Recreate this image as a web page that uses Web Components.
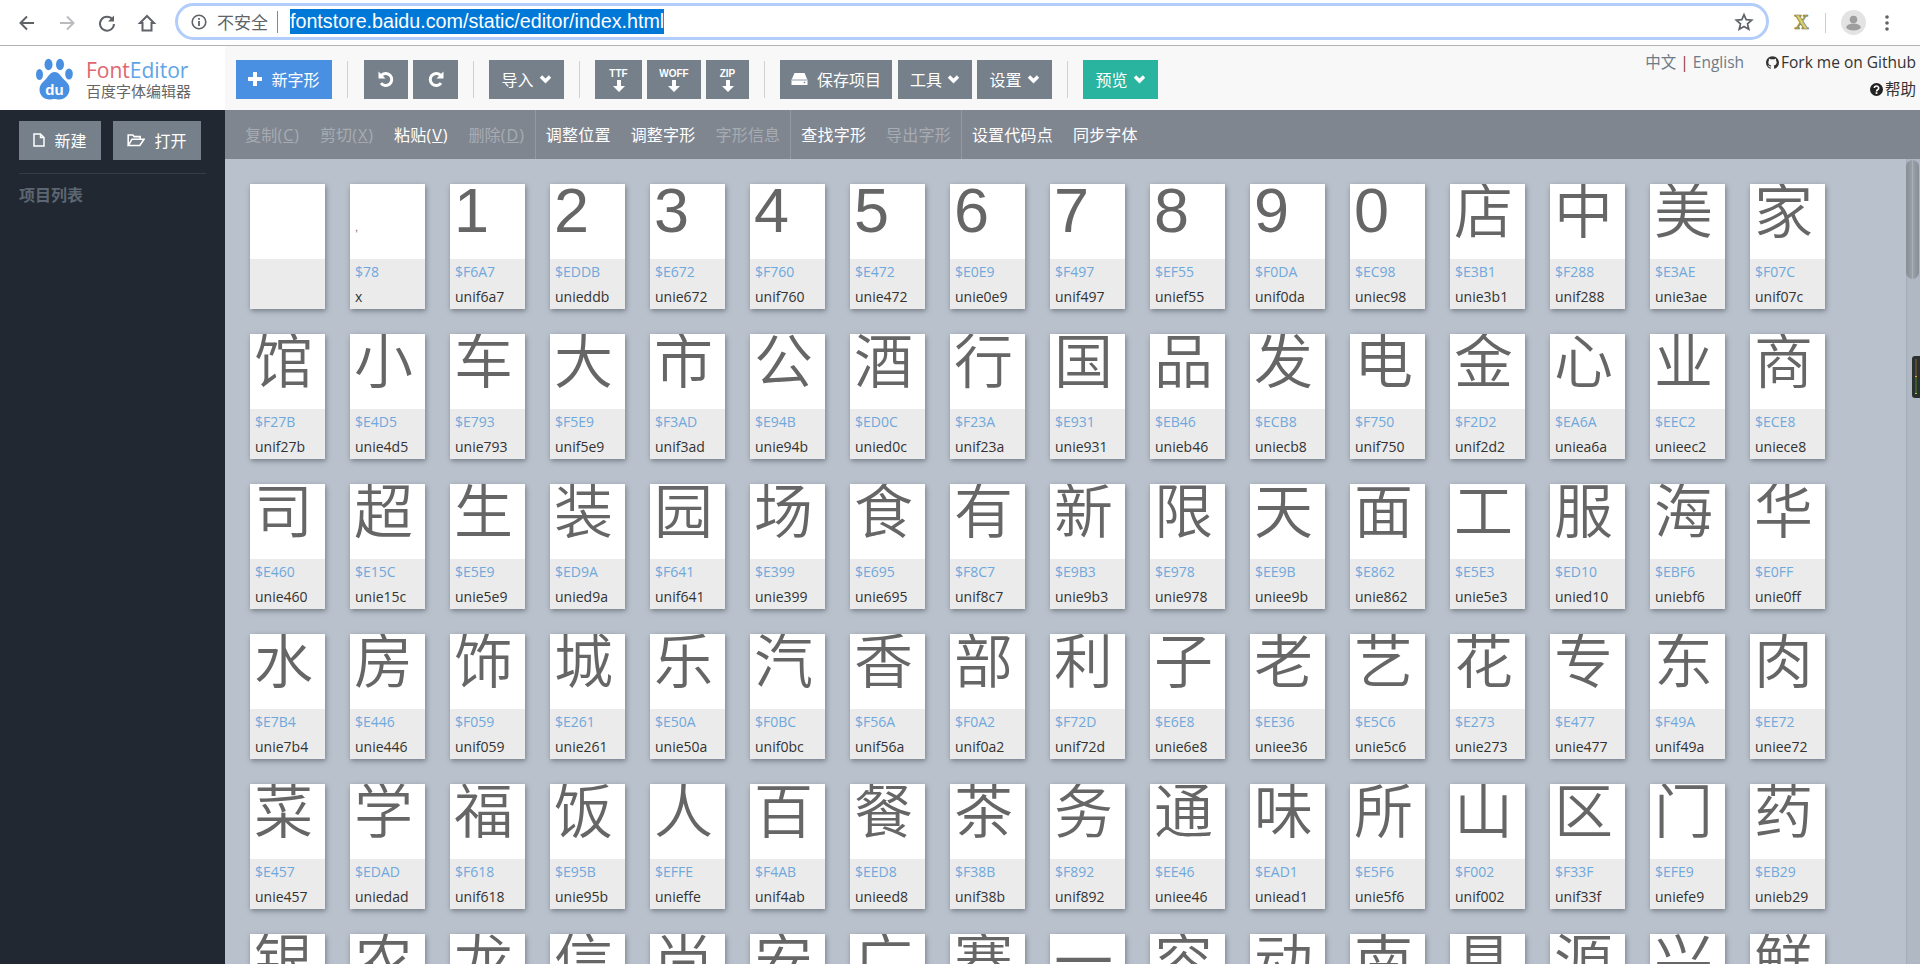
<!DOCTYPE html>
<html lang="zh">
<head>
<meta charset="utf-8">
<title>FontEditor</title>
<style>
  html, body { margin: 0; height: 964px; overflow: hidden; background: #b9c2cc; }
  body {
    display: flex;
    flex-direction: column;
    font-family: "Open Sans", "Noto Sans CJK SC", sans-serif;
  }
</style>
</head>
<body>
<browser-bar></browser-bar>
<app-header></app-header>
<app-main>
  <side-bar slot="side"></side-bar>
  <glyph-toolbar slot="tools"></glyph-toolbar>
  <glyph-list slot="list"></glyph-list>
</app-main>

<script>
const ICONS = {
  plus: '<svg width="14" height="14" viewBox="0 0 14 14"><path d="M5 0h4v5h5v4H9v5H5V9H0V5h5z" fill="#fff"/></svg>',
  undo: '<svg width="18" height="18" viewBox="0 0 18 18"><path d="M4.6 5.2A6 6 0 1 1 4 13.2" fill="none" stroke="#fff" stroke-width="3"/><path d="M1.5 1.5v7h7z" fill="#fff"/></svg>',
  redo: '<svg width="18" height="18" viewBox="0 0 18 18"><path d="M13.4 5.2A6 6 0 1 0 14 13.2" fill="none" stroke="#fff" stroke-width="3"/><path d="M16.5 1.5v7h-7z" fill="#fff"/></svg>',
  chevron: '<svg width="13" height="10" viewBox="0 0 13 10"><path d="M2 2.5l4.5 4.5L11 2.5" fill="none" stroke="#fff" stroke-width="3.4"/></svg>',
  arrow: '<svg width="12" height="12" viewBox="0 0 12 12"><path d="M4 0h4v6h4l-6 6-6-6h4z" fill="#fff"/></svg>',
  hdd: '<svg width="17" height="14" viewBox="0 0 17 14"><path d="M3.5 1h10l3 7v5H.5V8z" fill="#fff"/><path d="M1 8h15" stroke="#75808a" stroke-width=".8"/><circle cx="13.5" cy="10.5" r=".8" fill="#75808a"/></svg>',
  file: '<svg width="12" height="14" viewBox="0 0 12 14"><path d="M1 1h6.5L11 4.5V13H1z M7.5 1v3.5H11" fill="none" stroke="#fff" stroke-width="1.5"/></svg>',
  folder: '<svg width="18" height="14" viewBox="0 0 18 14"><path d="M1.2 12V2h4.6l1.4 1.6h6V6 M1.2 12.5h11.6L17 6.2H5z" fill="none" stroke="#fff" stroke-width="1.6"/></svg>',
  github: '<svg width="13" height="13" viewBox="0 0 24 24"><path fill="#333" d="M12 .297c-6.63 0-12 5.373-12 12 0 5.303 3.438 9.8 8.205 11.385.6.113.82-.258.82-.577 0-.285-.01-1.04-.015-2.04-3.338.724-4.042-1.61-4.042-1.61C4.422 18.07 3.633 17.7 3.633 17.7c-1.087-.744.084-.729.084-.729 1.205.084 1.838 1.236 1.838 1.236 1.07 1.835 2.809 1.305 3.495.998.108-.776.417-1.305.76-1.605-2.665-.3-5.466-1.332-5.466-5.93 0-1.31.465-2.38 1.235-3.22-.135-.303-.54-1.523.105-3.176 0 0 1.005-.322 3.3 1.23.96-.267 1.98-.399 3-.405 1.02.006 2.04.138 3 .405 2.28-1.552 3.285-1.23 3.285-1.23.645 1.653.24 2.873.12 3.176.765.84 1.23 1.91 1.23 3.22 0 4.61-2.805 5.625-5.475 5.92.42.36.81 1.096.81 2.22 0 1.606-.015 2.896-.015 3.286 0 .315.21.69.825.57C20.565 22.092 24 17.592 24 12.297c0-6.627-5.373-12-12-12"/></svg>',
  help: '<svg width="13" height="13" viewBox="0 0 13 13"><circle cx="6.5" cy="6.5" r="6.5" fill="#222"/><path d="M4.3 5a2.2 2 0 1 1 3.3 1.8c-.8.5-1.1.8-1.1 1.6" fill="none" stroke="#fff" stroke-width="1.6"/><rect x="5.6" y="9.2" width="1.8" height="1.7" fill="#fff"/></svg>'
};

class BrowserBar extends HTMLElement {
  constructor() {
    super();
    this.attachShadow({ mode: 'open' });
    this.shadowRoot.innerHTML = `
      <style>
        :host {
          display: flex;
          align-items: center;
          flex: none;
          height: 45px;
          box-sizing: content-box;
          background: #fff;
          border-bottom: 1px solid #b4b4b4;
          font-family: "Liberation Sans", "Noto Sans CJK SC", sans-serif;
        }
        .nav { display: flex; width: 175px; padding-left: 17px; box-sizing: border-box; gap: 20px; }
        .nav svg { display: block; }
        .omni {
          flex: 1;
          height: 37px;
          margin-top: -2px;
          box-sizing: border-box;
          border: 3px solid #b3cdfb;
          border-radius: 19px;
          display: flex;
          align-items: center;
          padding-left: 13px;
          color: #5f6368;
          font-size: 17px;
        }
        .info { margin-right: 10px; }
        .sep { width: 1px; height: 22px; background: #888; margin: 0 12px 0 9px; }
        .url {
          background: #0078d7;
          color: #fff;
          font-size: 19.7px;
          line-height: 25px;
          height: 25px;
          white-space: nowrap;
        }
        .star { margin-left: auto; margin-right: 12px; }
        .ext { display: flex; align-items: center; width: 151px; flex: none; }
        .x { margin-left: 19px; font: bold 18px "DejaVu Serif", serif; color: #d9cf6c; -webkit-text-stroke: .6px #6b6a3a; width: 27px; text-align: center; }
        .line { width: 1px; height: 20px; background: #ccc; margin-left: 10px; }
        .avatar { margin-left: 15px; }
        .dots { margin-left: 19px; }
      </style>
      <div class="nav">
        <svg width="20" height="20" viewBox="0 0 20 20"><path d="M17 10H4M10 3.5L3.5 10l6.5 6.5" fill="none" stroke="#5f6368" stroke-width="2"/></svg>
        <svg width="20" height="20" viewBox="0 0 20 20"><path d="M3 10h13M10 3.5l6.5 6.5-6.5 6.5" fill="none" stroke="#b9bbbe" stroke-width="2"/></svg>
        <svg width="20" height="20" viewBox="0 0 20 20"><path d="M15.6 6.5A7 7 0 1 0 17 11" fill="none" stroke="#5f6368" stroke-width="2"/><path d="M17 2.5v6h-6z" fill="#5f6368"/></svg>
        <svg width="20" height="20" viewBox="0 0 20 20"><path d="M10 3L3 10h2.500v7.500h9V10H17z" fill="none" stroke="#5f6368" stroke-width="2"/></svg>
      </div>
      <div class="omni">
        <svg class="info" width="16" height="16" viewBox="0 0 16 16"><circle cx="8" cy="8" r="6.8" fill="none" stroke="#5f6368" stroke-width="1.6"/><path d="M7.100 7h1.800v5H7.100zM7.100 4h1.800v1.800H7.100z" fill="#5f6368"/></svg>
        <span>不安全</span><span class="sep"></span><span class="url">fontstore.baidu.com/static/editor/index.html</span>
        <svg class="star" width="20" height="20" viewBox="0 0 20 20"><path d="M10 2.600l2.200 5.100 5.500.5-4.200 3.600 1.300 5.400L10 14.400l-4.800 2.800 1.300-5.400L2.300 8.200l5.500-.5z" fill="none" stroke="#5f6368" stroke-width="1.700"/></svg>
      </div>
      <div class="ext">
        <span class="x">X</span>
        <span class="line"></span>
        <svg class="avatar" width="25" height="25" viewBox="0 0 25 25"><circle cx="12.5" cy="12.5" r="12.5" fill="#e3e3e3"/><circle cx="12.5" cy="9.5" r="3.8" fill="#9e9e9e"/><path d="M5 17.5c1-3 4-4 7.500-4s6.500 1 7.500 4c-1.500 2-4 3-7.500 3S6.500 19.500 5 17.500z" fill="#9e9e9e"/></svg>
        <svg class="dots" width="4" height="18" viewBox="0 0 4 18"><circle cx="2" cy="3" r="1.8" fill="#5f6368"/><circle cx="2" cy="9" r="1.8" fill="#5f6368"/><circle cx="2" cy="15" r="1.8" fill="#5f6368"/></svg>
      </div>
    `;
  }
}
customElements.define('browser-bar', BrowserBar);

class ToolBtn extends HTMLElement {
  constructor() {
    super();
    this.attachShadow({ mode: 'open' });
    this.shadowRoot.innerHTML = `
      <style>
        :host {
          display: inline-flex;
          align-items: center;
          justify-content: center;
          gap: 9px;
          height: 39px;
          padding-bottom: 2px;
          box-sizing: border-box;
          background: #75808a;
          color: #fff;
          font-size: 16px;
          white-space: nowrap;
          flex: none;
        }
        :host([kind="blue"]) { background: #4a90e2; }
        :host([kind="teal"]) { background: #29b49f; }
        :host([tight]) { gap: 5px; }
        svg { display: block; }
      </style>
      <slot></slot>
    `;
  }
}
customElements.define('tool-btn', ToolBtn);

class FileBtn extends HTMLElement {
  constructor() {
    super();
    this.attachShadow({ mode: 'open' });
    this.shadowRoot.innerHTML = `
      <style>
        :host {
          display: flex;
          flex-direction: column;
          align-items: center;
          justify-content: center;
          height: 39px;
          background: #75808a;
          color: #fff;
          font: bold 10px/11px "Liberation Sans", sans-serif;
          flex: none;
        }
        svg { display: block; margin-top: 1px; }
      </style>
      <span><slot></slot></span>${ICONS.arrow}
    `;
  }
}
customElements.define('file-btn', FileBtn);

class AppHeader extends HTMLElement {
  constructor() {
    super();
    this.attachShadow({ mode: 'open' });
    this.shadowRoot.innerHTML = `
      <style>
        :host {
          display: flex;
          flex: none;
          height: 64px;
          background: #f8f8f8;
          color: #333;
          font-size: 15.5px;
        }
        .logo {
          width: 225px;
          flex: none;
          background: #fff;
          display: flex;
          gap: 13px;
          padding: 12px 0 0 36px;
          box-sizing: border-box;
        }
        .logo svg { display: block; flex: none; }
        .name { font-size: 21px; line-height: 22px; margin-top: 1px; white-space: nowrap; }
        .name b { font-weight: 400; color: #e0666e; }
        .name i { font-style: normal; color: #5fa5e6; }
        .sub { font-size: 15px; line-height: 20px; color: #666; white-space: nowrap; }
        .tools { display: flex; align-items: flex-start; padding: 14px 0 0 11px; }
        .sep { width: 1px; height: 37px; margin: 1px 15px 0; background: #d0d0d0; flex: none; }
        .sep.first { margin-right: 16px; }
        .g5 { display: flex; gap: 5px; }
        .right {
          margin-left: auto;
          padding: 3px 4px 0 0;
          display: flex;
          flex-direction: column;
          align-items: flex-end;
          line-height: 27px;
          white-space: nowrap;
        }
        .line { display: flex; align-items: center; gap: 2px; }
        .lang { color: #6d7b88; margin-right: 20px; }
        .lang em { font-style: normal; color: #8b3a2c; }
      </style>
      <div class="logo">
        <svg width="37" height="42" viewBox="0 0 37 42">
          <g fill="#4a90e2">
            <ellipse cx="3.500" cy="16.500" rx="3.500" ry="5.500"/>
            <ellipse cx="12.500" cy="6.500" rx="4" ry="5.800"/>
            <ellipse cx="24" cy="6.500" rx="4" ry="5.800"/>
            <ellipse cx="33" cy="16" rx="3.800" ry="5.500"/>
            <path d="M18.500 14c5 0 6.500 5 10 8 3 2.500 5 5 5 9 0 6-5 10.500-10 10.500-2 0-3.500-.5-5-.5s-3 .5-5 .5c-5.500 0-10-4-10-10 0-4 2-6.500 5-9 3.500-3 5-8.500 10-8.500z"/>
          </g>
          <text x="18.500" y="37" text-anchor="middle" font-family="Liberation Sans" font-weight="700" font-size="15" fill="#fff">du</text>
        </svg>
        <div>
          <div class="name"><b>Font</b><i>Editor</i></div>
          <div class="sub">百度字体编辑器</div>
        </div>
      </div>
      <div class="tools">
        <tool-btn kind="blue" style="width:96px">${ICONS.plus}<span>新字形</span></tool-btn>
        <span class="sep first"></span>
        <div class="g5">
          <tool-btn style="width:44px">${ICONS.undo}</tool-btn>
          <tool-btn style="width:45px">${ICONS.redo}</tool-btn>
        </div>
        <span class="sep"></span>
        <tool-btn tight style="width:75px"><span>导入</span>${ICONS.chevron}</tool-btn>
        <span class="sep"></span>
        <div class="g5">
          <file-btn style="width:47px">TTF</file-btn>
          <file-btn style="width:54px">WOFF</file-btn>
          <file-btn style="width:43px">ZIP</file-btn>
        </div>
        <span class="sep"></span>
        <tool-btn style="width:112px">${ICONS.hdd}<span>保存项目</span></tool-btn>
        <tool-btn tight style="width:74px;margin-left:6px"><span>工具</span>${ICONS.chevron}</tool-btn>
        <tool-btn tight style="width:75px;margin-left:5px"><span>设置</span>${ICONS.chevron}</tool-btn>
        <span class="sep"></span>
        <tool-btn kind="teal" tight style="width:75px"><span>预览</span>${ICONS.chevron}</tool-btn>
      </div>
      <div class="right">
        <div class="line">
          <span class="lang">中文 <em>|</em> English</span>
          ${ICONS.github}<span>Fork me on Github</span>
        </div>
        <div class="line">${ICONS.help}<span>帮助</span></div>
      </div>
    `;
  }
}
customElements.define('app-header', AppHeader);

class AppMain extends HTMLElement {
  constructor() {
    super();
    this.attachShadow({ mode: 'open' });
    this.shadowRoot.innerHTML = `
      <style>
        :host {
          display: grid;
          grid-template-columns: 225px minmax(0, 1fr);
          grid-template-rows: 49px minmax(0, 1fr);
          flex: 1;
          min-height: 0;
        }
        ::slotted([slot="side"]) { grid-row: 1 / 3; }
      </style>
      <slot name="side"></slot>
      <slot name="tools"></slot>
      <slot name="list"></slot>
    `;
  }
}
customElements.define('app-main', AppMain);

class SideBar extends HTMLElement {
  constructor() {
    super();
    this.attachShadow({ mode: 'open' });
    this.shadowRoot.innerHTML = `
      <style>
        :host {
          display: block;
          background: #222831;
          padding: 11px 19px 0;
        }
        .btns { display: flex; gap: 12px; padding-bottom: 13px; border-bottom: 1px solid #363c45; }
        .title { margin-top: 9px; font-size: 16px; font-weight: 700; line-height: 24px; color: #5b6672; }
      </style>
      <div class="btns">
        <tool-btn style="width:82px">${ICONS.file}<span>新建</span></tool-btn>
        <tool-btn style="width:88px">${ICONS.folder}<span>打开</span></tool-btn>
      </div>
      <div class="title">项目列表</div>
    `;
  }
}
customElements.define('side-bar', SideBar);

class GlyphToolbar extends HTMLElement {
  constructor() {
    super();
    this.attachShadow({ mode: 'open' });
    const groups = [
      [['复制<b>(<u>C</u>)</b>', 0], ['剪切<b>(<u>X</u>)</b>', 0], ['粘贴<b>(<u>V</u>)</b>', 1], ['删除<b>(<u>D</u>)</b>', 0]],
      [['调整位置', 1], ['调整字形', 1], ['字形信息', 0]],
      [['查找字形', 1], ['导出字形', 0]],
      [['设置代码点', 1], ['同步字体', 1]]
    ];
    const html = groups.map(g => '<div class="group">' + g.map(([t, on]) =>
      `<span class="${on ? 'on' : ''}">${t}</span>`).join('') + '</div>').join('');
    this.shadowRoot.innerHTML = `
      <style>
        :host {
          display: flex;
          background: #808690;
          height: 49px;
          padding-left: 10px;
          font-size: 16px;
          white-space: nowrap;
        }
        .group { display: flex; align-items: center; padding-bottom: 2px; box-sizing: border-box; border-right: 1px solid #9299a2; }
        .group:last-child { border-right: 0; }
        span { padding: 0 10px; color: #a7acb3; letter-spacing: .2px; }
        span.on { color: #fff; }
        b { font-weight: 400; letter-spacing: 1px; }
      </style>
      ${html}
    `;
  }
}
customElements.define('glyph-toolbar', GlyphToolbar);

class GlyphItem extends HTMLElement {
  constructor() {
    super();
    this.attachShadow({ mode: 'open' });
    this.shadowRoot.innerHTML = `
      <style>
        :host {
          display: flex;
          flex-direction: column;
          width: 75px;
          height: 125px;
          background: #ebebeb;
          box-shadow: 1px 2px 5px rgba(60, 68, 78, .55);
        }
        .box {
          height: 75px;
          flex: none;
          background: #fff;
          overflow: hidden;
          color: #666;
          font: 350 59px/58px "Liberation Sans", "Noto Sans CJK SC", sans-serif;
          padding-left: 4px;
          box-sizing: border-box;
          white-space: nowrap;
        }
        :host([digit]) .box { font-size: 63px; line-height: 53px; padding-left: 4px; }
        :host([tiny]) .box { font-size: 11px; line-height: 86px; padding-left: 5px; }
        .code { padding-left: 5px; font-size: 14px; line-height: 21px; margin-top: 2px; height: 21px; color: #6fa8dc; }
        .name { padding-left: 5px; font-size: 14px; line-height: 21px; margin-top: 4px; height: 21px; color: #333; }
      </style>
      <div class="box"><slot></slot></div>
      <div class="code"></div>
      <div class="name"></div>
    `;
  }
  connectedCallback() {
    const code = this.getAttribute('code');
    const name = this.getAttribute('name');
    this.shadowRoot.querySelector('.code').textContent = code ? '$' + code : '';
    this.shadowRoot.querySelector('.name').textContent = name || '';
  }
}
customElements.define('glyph-item', GlyphItem);

const GLYPHS = '1 F6A7,2 EDDB,3 E672,4 F760,5 E472,6 E0E9,7 F497,8 EF55,9 F0DA,0 EC98,店 E3B1,中 F288,美 E3AE,家 F07C,' +
  '馆 F27B,小 E4D5,车 E793,大 F5E9,市 F3AD,公 E94B,酒 ED0C,行 F23A,国 E931,品 EB46,发 ECB8,电 F750,金 F2D2,心 EA6A,业 EEC2,商 ECE8,' +
  '司 E460,超 E15C,生 E5E9,装 ED9A,园 F641,场 E399,食 E695,有 F8C7,新 E9B3,限 E978,天 EE9B,面 E862,工 E5E3,服 ED10,海 EBF6,华 E0FF,' +
  '水 E7B4,房 E446,饰 F059,城 E261,乐 E50A,汽 F0BC,香 F56A,部 F0A2,利 F72D,子 E6E8,老 EE36,艺 E5C6,花 E273,专 E477,东 F49A,肉 EE72,' +
  '菜 E457,学 EDAD,福 F618,饭 E95B,人 EFFE,百 F4AB,餐 EED8,茶 F38B,务 F892,通 EE46,味 EAD1,所 E5F6,山 F002,区 F33F,门 EFE9,药 EB29';
const LAST_ROW = '银农龙信尚安广赛一容动南具源兴鲜';

class GlyphList extends HTMLElement {
  constructor() {
    super();
    this.attachShadow({ mode: 'open' });
    this.shadowRoot.innerHTML = `
      <style>
        :host {
          display: flex;
          position: relative;
          min-height: 0;
          overflow: hidden;
          background: #b9c2cc;
        }
        .grid {
          flex: 1;
          display: grid;
          grid-template-columns: repeat(16, 75px);
          column-gap: 25px;
          row-gap: 25px;
          align-content: start;
          padding: 25px 0 0 25px;
          height: 1000px;
        }
        .bar { width: 14px; flex: none; background: #b0b9c3; box-shadow: inset 1px 0 1px #a4adb7; }
        .thumb { height: 119px; margin-top: 1px; border-radius: 7px; width: 13px; background: linear-gradient(90deg, #868d95, #98a0a8 45%, #a9b0b7 50%, #98a0a8 55%, #868d95); }
        .meter {
          position: absolute;
          right: 0;
          top: 197px;
          width: 8px;
          height: 42px;
          background: #2b3030;
          border-radius: 3px 0 0 3px;
        }
        .meter i { position: absolute; left: 3px; width: 2px; display: block; }
      </style>
      <div class="grid"></div>
      <div class="bar"><div class="thumb"></div></div>
      <div class="meter">
        <i style="top:3px;height:17px;background:#5c4a30"></i>
        <i style="top:20px;height:1px;background:#f0a030"></i>
        <i style="top:21px;height:16px;background:#3e5a30"></i>
        <i style="top:37px;height:1px;background:#8ee030"></i>
      </div>
    `;
    const grid = this.shadowRoot.querySelector('.grid');
    const add = (text, code, name, flag) => {
      const el = document.createElement('glyph-item');
      if (code) el.setAttribute('code', code);
      if (name) el.setAttribute('name', name);
      if (flag) el.setAttribute(flag, '');
      el.textContent = text;
      grid.appendChild(el);
    };
    add('');
    add(',', '78', 'x', 'tiny');
    GLYPHS.split(',').forEach(entry => {
      const [ch, code] = entry.split(' ');
      add(ch, code, 'uni' + code.toLowerCase(), /\d/.test(ch) ? 'digit' : '');
    });
    for (const ch of LAST_ROW) add(ch);
  }
}
customElements.define('glyph-list', GlyphList);
</script>
</body>
</html>
